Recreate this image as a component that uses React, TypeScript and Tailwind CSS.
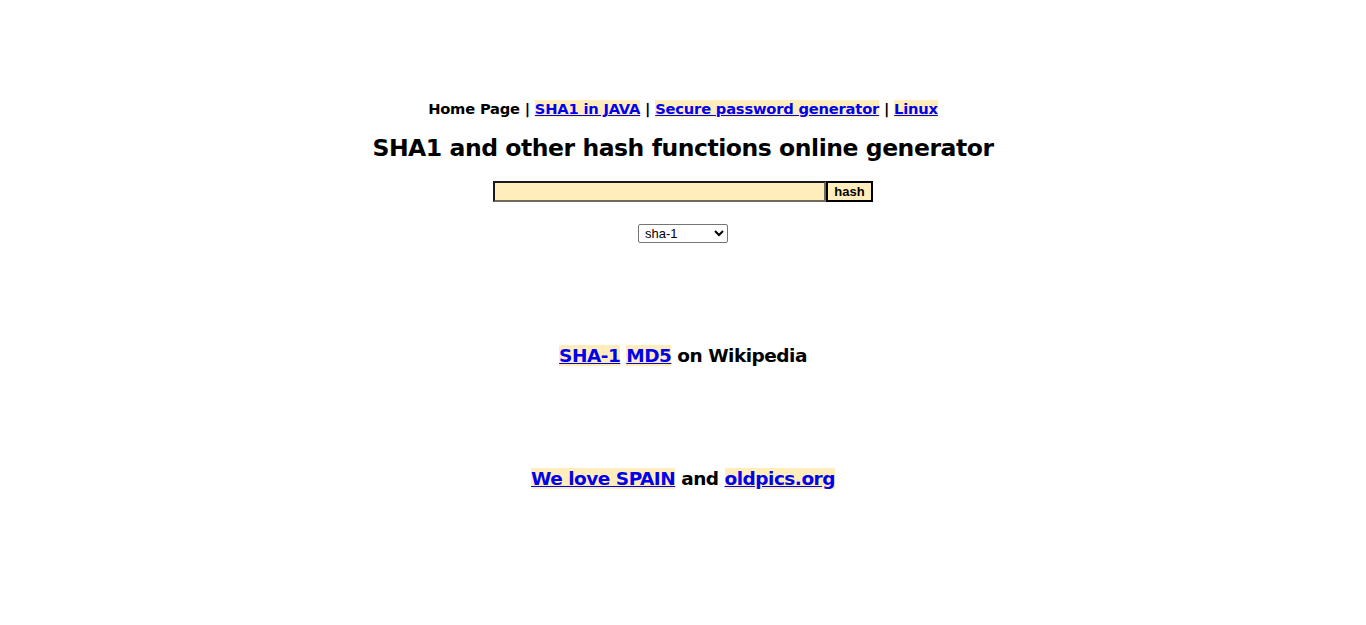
import React from "react";

const hl = "bg-[#ffeebb] text-[#0000ee] underline";

const App = () => {
  return (
    <div className="min-h-[625px] bg-white font-['DejaVu_Sans',Verdana,sans-serif] text-black">
      <div className="flex flex-col items-center pt-[100px]">
        <div className="text-[14.7px] font-bold leading-[18px] tracking-[-0.2px]">
          Home Page | <a className={hl} href="#">SHA1 in JAVA</a> |{" "}
          <a className={hl} href="#">Secure password generator</a> |{" "}
          <a className={hl} href="#">Linux</a>
        </div>
        <h1 className="mt-[16px] text-[23.5px] font-bold leading-[28px] tracking-[-0.45px]">
          SHA1 and other hash functions online generator
        </h1>
        <form className="mt-[19px] flex">
          <input
            type="text"
            className="h-[21px] w-[333px] border-2 border-t-[#1a1a1a] border-l-[#1a1a1a] border-b-[#706a5a] border-r-[#706a5a] bg-[#ffeebb] outline-none"
          />
          <button
            type="button"
            className="h-[21px] w-[47px] border-2 border-black bg-[#ffeebb] font-['Liberation_Sans',Arial,sans-serif] text-[13px] font-bold leading-none"
          >
            hash
          </button>
        </form>
        <select className="mt-[22px] h-[19px] w-[90px] rounded-[2px] border border-[#767676] bg-white px-[2px] font-['Liberation_Sans',Arial,sans-serif] text-[13px] leading-none">
          <option>sha-1</option>
          <option>md5</option>
        </select>
        <div className="mt-[102px] text-[18.5px] font-bold leading-[22px] tracking-[-0.5px]">
          <a className={hl} href="#">SHA-1</a> <a className={hl} href="#">MD5</a> on Wikipedia
        </div>
        <div className="mt-[101px] text-[18.5px] font-bold leading-[22px] tracking-[-0.5px]">
          <a className={hl} href="#">We love SPAIN</a> and{" "}
          <a className={hl} href="#">oldpics.org</a>
        </div>
      </div>
    </div>
  );
};

export default App;
